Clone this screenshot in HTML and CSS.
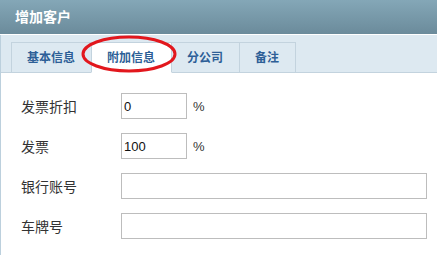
FILE: index.html
```
<!DOCTYPE html>
<html lang="zh">
<head>
<meta charset="utf-8">
<link rel="stylesheet" href="styles.css">
</head>
<body>
<div class="header">增加客户</div>
<div class="panel">
  <div class="tabbar">
    <div class="tab">基本信息</div>
    <div class="tab active">附加信息</div>
    <div class="tab">分公司</div>
    <div class="tab">备注</div>
  </div>
  <form class="form">
    <div class="row"><label class="label">发票折扣</label><input class="input small" type="text" value="0"><span class="unit">%</span></div>
    <div class="row"><label class="label">发票</label><input class="input small" type="text" value="100"><span class="unit">%</span></div>
    <div class="row"><label class="label">银行账号</label><input class="input wide" type="text" value=""></div>
    <div class="row"><label class="label">车牌号</label><input class="input wide" type="text" value=""></div>
  </form>
</div>
<svg class="mark" width="100" height="42" viewBox="0 0 100 42"><ellipse cx="49" cy="20" rx="46" ry="17" fill="none" stroke="#e2171d" stroke-width="3"/></svg>
</body>
</html>
```
FILE: styles.css
```
html, body {
  margin: 0;
  padding: 0;
  background: #fff;
}
body {
  font-family: "Noto Sans CJK SC", "Liberation Sans", sans-serif;
  position: relative;
  width: 437px;
  height: 255px;
  overflow: hidden;
}
.header {
  height: 34px;
  line-height: 32px;
  padding-left: 15px;
  color: #fff;
  font-size: 14px;
  font-weight: bold;
  background: linear-gradient(#84a7b7, #6b8b9b);
  border-bottom: 1px solid #fff;
}
.panel {
  border-left: 1px solid #bcd0dd;
  height: 220px;
}
.tabbar {
  display: flex;
  align-items: flex-end;
  height: 37px;
  padding-left: 10px;
  background: #dde9f1;
  border-bottom: 1px solid #c3d3de;
}
.tab {
  position: relative;
  height: 29px;
  line-height: 28px;
  padding: 0 16px 0 15px;
  margin-bottom: -1px;
  border: 1px solid #c3d3de;
  font-size: 12px;
  font-weight: bold;
  color: #2d5f97;
  background: #dde9f1;
}
.tab + .tab {
  margin-left: -1px;
}
.tab.active {
  z-index: 1;
  background: #fff;
  border-bottom-color: #fff;
}
.form {
  display: flex;
  flex-direction: column;
  gap: 14px;
  padding: 20px 0 0 20px;
  margin: 0;
}
.row {
  display: flex;
  align-items: center;
  height: 26px;
}
.label {
  width: 100px;
  font-size: 14px;
  color: #333;
}
.input {
  box-sizing: border-box;
  height: 26px;
  border: 1px solid #bdbdbd;
  padding: 0 2px;
  margin: 0;
  font-family: "Liberation Sans", Arial, sans-serif;
  font-size: 13px;
  color: #111;
  outline: none;
}
.input.small {
  width: 66px;
}
.input.wide {
  width: 306px;
}
.unit {
  margin-left: 6px;
  font-family: "Liberation Sans", Arial, sans-serif;
  font-size: 13px;
  color: #333;
}
.mark {
  position: absolute;
  left: 80px;
  top: 34px;
  z-index: 2;
}
```
